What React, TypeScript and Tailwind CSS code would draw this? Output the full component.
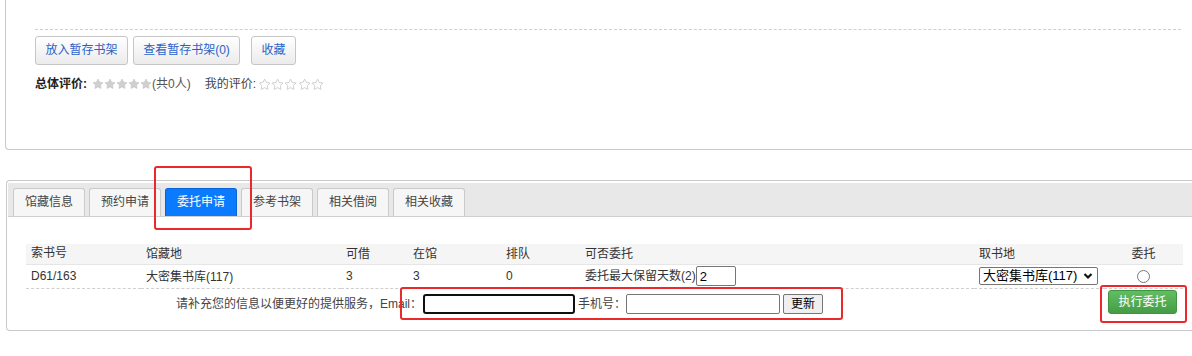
import React from 'react'

const FONT = { fontFamily: '"Liberation Sans", "Noto Sans CJK SC", sans-serif' }

const STAR = 'M12 2l3.09 6.26L22 9.27l-5 4.87 1.18 6.88L12 17.77l-6.18 3.25L7 14.14 2 9.27l6.91-1.01L12 2z'

function Star({ filled }: { filled: boolean }) {
  return (
    <svg width={filled ? 12 : 13.2} height={filled ? 12 : 13} viewBox="0 0 24 24" className="shrink-0">
      <path
        d={STAR}
        fill={filled ? '#cfcfcf' : '#ffffff'}
        stroke={filled ? '#bdbdbd' : '#c8c8c8'}
        strokeWidth={filled ? 1 : 1.6}
        strokeLinejoin="round"
      />
    </svg>
  )
}

const tabs = ['馆藏信息', '预约申请', '委托申请', '参考书架', '相关借阅', '相关收藏']

export default function App() {
  return (
    <div
      className="relative w-[1192px] h-[356px] overflow-hidden bg-white text-[12px] text-[#333]"
      style={{ ...FONT, textSpacingTrim: 'space-all' } as React.CSSProperties}
    >
      {/* Upper panel */}
      <div className="ml-[5px] h-[150px] border-l border-b border-[#c8c8c8] rounded-bl-[4px] pl-[29px] pr-[11px]">
        <div className="h-[30px] border-b border-dashed border-[#cfcfcf]" />
        <div className="flex items-center mt-[5px] h-[30px]">
          <button className="h-[29px] w-[93px] rounded-[3px] border border-[#c6c6c6] bg-gradient-to-b from-white to-[#ebebeb] text-[#2a63c8] leading-[27px]">
            放入暂存书架
          </button>
          <button className="ml-[5px] h-[29px] w-[107px] rounded-[3px] border border-[#c6c6c6] bg-gradient-to-b from-white to-[#ebebeb] text-[#2a63c8] leading-[27px]">
            查看暂存书架(0)
          </button>
          <button className="ml-[11px] h-[29px] w-[45px] rounded-[3px] border border-[#c6c6c6] bg-gradient-to-b from-white to-[#ebebeb] text-[#2a63c8] leading-[27px]">
            收藏
          </button>
        </div>
        <div className="flex items-center mt-[11px] h-[16px] leading-[16px]">
          <span className="font-bold text-[#222]">总体评价:</span>
          <span className="ml-[5px] flex">
            {[0, 1, 2, 3, 4].map(i => (
              <Star key={i} filled />
            ))}
          </span>
          <span className="text-[#555]">(共0人)</span>
          <span className="ml-[14px] text-[#444]">我的评价:</span>
          <span className="ml-[2px] flex">
            {[0, 1, 2, 3, 4].map(i => (
              <Star key={i} filled={false} />
            ))}
          </span>
        </div>
      </div>

      {/* Lower panel */}
      <div className="ml-[6px] mt-[30px] h-[151px] border-l border-t border-b border-[#c8c8c8] rounded-l-[4px] pt-[2px] pl-[1px]">
        <div className="flex items-end h-[34px] bg-[#e8e8e8] border-b border-[#cfcfcf] pl-[5px] gap-[4px]">
          {tabs.map((t, i) =>
            i === 2 ? (
              <div
                key={t}
                className="h-[28px] px-[11px] leading-[27px] rounded-t-[3px] border border-b-0 border-[#0a63d6] bg-[#0a7bff] text-white"
              >
                {t}
              </div>
            ) : (
              <div
                key={t}
                className="h-[28px] px-[11px] leading-[27px] rounded-t-[3px] border border-b-0 border-[#cacaca] bg-[#f6f6f6] text-[#444]"
              >
                {t}
              </div>
            )
          )}
        </div>

        <div className="ml-[18px] mr-[9px] mt-[27px]">
          <table className="w-full border-collapse table-fixed">
            <colgroup>
              <col className="w-[115px]" />
              <col className="w-[200px]" />
              <col className="w-[67px]" />
              <col className="w-[93px]" />
              <col className="w-[79px]" />
              <col className="w-[394px]" />
              <col className="w-[130px]" />
              <col />
            </colgroup>
            <thead>
              <tr className="h-[20px] bg-[#f5f5f5] border-b border-[#e6e6e6] text-left">
                <th className="font-normal pl-[5px] leading-[19px]">索书号</th>
                <th className="font-normal pl-[5px]">馆藏地</th>
                <th className="font-normal pl-[5px]">可借</th>
                <th className="font-normal pl-[5px]">在馆</th>
                <th className="font-normal pl-[5px]">排队</th>
                <th className="font-normal pl-[5px]">可否委托</th>
                <th className="font-normal pl-[5px]">取书地</th>
                <th className="font-normal text-center">委托</th>
              </tr>
            </thead>
            <tbody>
              <tr className="h-[24px] border-b border-dashed border-[#cfcfcf]">
                <td className="pl-[5px]">D61/163</td>
                <td className="pl-[5px] pt-[2px]">大密集书库(117)</td>
                <td className="pl-[5px]">3</td>
                <td className="pl-[5px]">3</td>
                <td className="pl-[5px]">0</td>
                <td className="pl-[5px]">
                  <div className="flex items-center">
                    <span>委托最大保留天数(2)</span>
                    <input
                      defaultValue="2"
                      className="w-[40px] h-[20px] border border-[#767676] rounded-[2px] px-[3px] text-[13px] text-black outline-none"
                      style={FONT}
                    />
                  </div>
                </td>
                <td className="pl-[5px]">
                  <div className="flex items-center justify-between w-[119px] h-[18px] border border-[#767676] rounded-[2px] pl-[3px] pr-[4px] text-[13px] text-black">
                    <span className="leading-[16px]">大密集书库(117)</span>
                    <svg width="10" height="8" viewBox="0 0 10 8">
                      <path d="M1.5 2l3.5 3.5L8.5 2" fill="none" stroke="#111" strokeWidth="2.2" />
                    </svg>
                  </div>
                </td>
                <td className="text-center">
                  <span className="inline-block w-[13px] h-[13px] rounded-full border border-[#767676] bg-white align-middle" />
                </td>
              </tr>
            </tbody>
          </table>

          <div className="flex items-start justify-between pl-[150px] pr-[6px]">
            <div className="flex items-center mt-[5px] h-[20px]">
              <span className="text-[#444]">请补充您的信息以便更好的提供服务，Email：</span>
              <input className="ml-[1px] w-[152px] h-[20px] border-2 border-[#101010] rounded-[3px] outline-none" />
              <span className="ml-[3px] text-[#444]">手机号：</span>
              <input className="w-[154px] h-[20px] border border-[#767676] rounded-[2px] outline-none" />
              <button className="ml-[3px] w-[40px] h-[20px] border border-[#767676] rounded-[2px] bg-[#efefef] text-black leading-[18px]">
                更新
              </button>
            </div>
            <button className="mt-[1px] w-[69px] h-[24px] rounded-[3px] border border-[#409540] bg-gradient-to-b from-[#62bd62] to-[#449d44] text-white leading-[22px]">
              执行委托
            </button>
          </div>
        </div>
      </div>

      {/* Annotation boxes */}
      <div className="absolute left-[154px] top-[166px] w-[98px] h-[64px] border-2 border-[#ea2a2a] rounded-[3px]" />
      <div className="absolute left-[400px] top-[287px] w-[443px] h-[33px] border-2 border-[#ea2a2a] rounded-[3px]" />
      <div className="absolute left-[1100px] top-[285px] w-[87px] h-[38px] border-2 border-[#ea2a2a] rounded-[3px]" />
    </div>
  )
}
